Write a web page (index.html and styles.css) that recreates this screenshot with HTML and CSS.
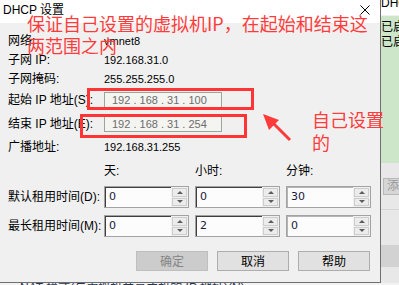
FILE: index.html
```html
<!DOCTYPE html>
<html lang="zh-CN">
<head>
    <meta charset="UTF-8">
    <title>DHCP 设置</title>
    <link rel="stylesheet" href="styles.css">
</head>
<body>
<div class="screen">
    <div class="top">
        <div class="dialog">
            <div class="titlebar">
                <span class="title">DHCP 设置</span>
                <svg class="close" width="10" height="10" viewBox="0 0 10 10">
                    <path d="M0.5 0.5 L9.5 9.5 M9.5 0.5 L0.5 9.5" stroke="#000" stroke-width="1" fill="none"/>
                </svg>
            </div>
            <div class="body">
                <div class="info">
                    <div class="row"><span>网络:</span><span class="value">vmnet8</span></div>
                    <div class="row"><span>子网 IP:</span><span class="value">192.168.31.0</span></div>
                    <div class="row"><span>子网掩码:</span><span class="value">255.255.255.0</span></div>
                    <div class="row tall"><span>起始 IP 地址(S):</span><div class="ip">192 . 168 . 31 . 100</div></div>
                    <div class="row taller"><span>结束 IP 地址(E):</span><div class="ip">192 . 168 . 31 . 254</div></div>
                    <div class="row last"><span>广播地址:</span><span class="value">192.168.31.255</span></div>
                </div>

                <!-- lease time grid -->
                <div class="lease">
                    <span></span>
                    <span class="head">天:</span>
                    <span class="head">小时:</span>
                    <span class="head">分钟:</span>

                    <span class="label">默认租用时间(D):</span>
                    <div class="spin"><div class="field">0</div><div class="arrows"><span class="up"></span><span class="down"></span></div></div>
                    <div class="spin"><div class="field">0</div><div class="arrows"><span class="up"></span><span class="down"></span></div></div>
                    <div class="spin dim"><div class="field">30</div><div class="arrows"><span class="up"></span><span class="down"></span></div></div>

                    <span class="label">最长租用时间(M):</span>
                    <div class="spin"><div class="field">0</div><div class="arrows"><span class="up"></span><span class="down"></span></div></div>
                    <div class="spin"><div class="field">2</div><div class="arrows"><span class="up"></span><span class="down"></span></div></div>
                    <div class="spin dim"><div class="field">0</div><div class="arrows"><span class="up"></span><span class="down"></span></div></div>
                </div>

                <div class="buttons">
                    <button type="button" class="btn disabled">确定</button>
                    <button type="button" class="btn">取消</button>
                    <button type="button" class="btn">帮助</button>
                </div>
            </div>
        </div>

        <div class="behind">
            <div class="bh-head"><span>DHCP</span></div>
            <div class="bh-list">
                <p>已启用</p>
                <p>已启用</p>
            </div>
            <div class="bh-btn">添加</div>
            <div class="bh-line"></div>
            <div class="bh-band"></div>
        </div>
    </div>
    <div class="under"><span>NAT 模式(与虚拟机共享主机的 IP 地址)(N)</span></div>

    <!-- red notes drawn over the screenshot -->
    <div class="note note-main">保证自己设置的虚拟机IP，在起始和结束这<br>两范围之内</div>
    <div class="note note-side">自己设置<br>的</div>
    <div class="mark m1"></div>
    <div class="mark m2"></div>
    <svg class="arrow" width="399" height="285" viewBox="0 0 399 285">
        <line x1="290" y1="140" x2="270" y2="120" stroke="#ff3a3a" stroke-width="3"/>
        <polygon points="263,114 279,120 269,130" fill="#ff3a3a"/>
    </svg>
</div>
</body>
</html>
```

FILE: styles.css
```css
* {
    margin: 0;
    padding: 0;
    box-sizing: border-box;
}

body {
    width: 399px;
    height: 285px;
    overflow: hidden;
    background-color: #f0f0f0;
    font-family: "Liberation Sans", "Noto Sans CJK SC", sans-serif;
    font-size: 12px;
    color: #000;
}

.screen {
    position: relative;
    height: 285px;
}

.top {
    display: flex;
    height: 283px;
}

.dialog {
    width: 381px;
    display: flex;
    flex-direction: column;
    background-color: #f0f0f0;
    border-right: 1px solid #6f6f6f;
    border-bottom: 1px solid #6f6f6f;
}

.titlebar {
    height: 23px;
    background-color: #fff;
    display: flex;
    align-items: center;
    padding-left: 3px;
    padding-bottom: 3px;
    line-height: 14px;
}

.close {
    margin-left: auto;
    margin-right: 10px;
}

.body {
    flex: 1;
    padding: 8px 0 0 8px;
}

.row {
    display: grid;
    grid-template-columns: 96px auto;
    align-items: center;
    height: 19px;
    line-height: 14px;
}

.row.tall {
    height: 23px;
}

.row.taller {
    height: 26px;
}

.row.last {
    height: 20px;
}

.value {
    font-size: 11px;
}

.ip {
    width: 118px;
    height: 16px;
    border: 1px solid #99a699;
    background-color: #f4f4f1;
    color: #6d6d6d;
    font-size: 11px;
    line-height: 14px;
    padding-left: 7px;
    white-space: pre;
}

.lease {
    display: grid;
    grid-template-columns: 90px 85px 85px 85px;
    grid-template-rows: 16px 22px 22px;
    column-gap: 6px;
    row-gap: 7px;
    margin-top: 6px;
    align-items: center;
    line-height: 14px;
}

.lease .label {
    white-space: nowrap;
}

.spin {
    display: flex;
    height: 22px;
    border: 1px solid #a3a3a3;
    background-color: #fcfcfc;
}

.spin .field {
    flex: 1;
    border-top: 1px solid #3f3f3f;
    border-left: 1px solid #3f3f3f;
    padding: 2px 0 0 3px;
    font-family: "DejaVu Sans", sans-serif;
    font-size: 11px;
    color: #1a1a3a;
}

.spin.dim .field {
    border-color: #b4b4b4;
}

.arrows {
    width: 17px;
    display: flex;
    flex-direction: column;
    gap: 1px;
    padding: 1px;
    background-color: #f0f0f0;
}

.arrows span {
    flex: 1;
    border: 1px solid #cdcdcd;
    background-color: #ececec;
    display: flex;
    align-items: center;
    justify-content: center;
}

.arrows .up::after {
    content: "";
    border-left: 3px solid transparent;
    border-right: 3px solid transparent;
    border-bottom: 3px solid #5c5c5c;
}

.arrows .down::after {
    content: "";
    border-left: 3px solid transparent;
    border-right: 3px solid transparent;
    border-top: 3px solid #5c5c5c;
}

.buttons {
    display: flex;
    justify-content: flex-end;
    gap: 9px;
    margin-top: 14px;
    padding-right: 10px;
}

.btn {
    width: 72px;
    height: 20px;
    border: 1px solid #adadad;
    background-color: #e1e1e1;
    font-family: "Noto Sans CJK SC", sans-serif;
    font-size: 12px;
    line-height: 16px;
    color: #000;
}

.btn.disabled {
    background-color: #cccccc;
    border-color: #bfbfbf;
    color: #858585;
}

.behind {
    flex: 1;
    display: flex;
    flex-direction: column;
    overflow: hidden;
    white-space: nowrap;
    background-color: #e8e8e8;
}

.bh-head {
    height: 15px;
    background-color: #fff;
    overflow: hidden;
}

.bh-head span {
    display: block;
    margin-top: -4px;
    line-height: 14px;
}

.bh-list {
    height: 148px;
    background-color: #cde6c9;
    padding-top: 5px;
    line-height: 15px;
    background-image: linear-gradient(#f0f0f0, #f0f0f0);
    background-size: 100% 1px;
    background-repeat: no-repeat;
}

.bh-btn {
    margin-top: 15px;
    margin-left: 2px;
    height: 17px;
    width: 30px;
    border: 1px solid #b8b8b8;
    background-color: #d6d6d6;
    color: #9a9a9a;
    padding-left: 3px;
    line-height: 15px;
}

.bh-line {
    margin-top: 14px;
    border-top: 1px solid #d6d6d6;
}

.bh-band {
    margin-top: 35px;
    height: 22px;
    background-color: #d2d2d2;
}

.under {
    height: 2px;
    overflow: hidden;
    background-color: #f3f3f3;
    color: #2a3550;
    padding-left: 20px;
}

.under span {
    display: block;
    margin-top: -1px;
    line-height: 12px;
}

.note {
    position: absolute;
    color: #ff3c3c;
    font-family: "Noto Sans CJK SC", sans-serif;
    font-size: 18px;
    white-space: nowrap;
}

.note-main {
    left: 27px;
    top: 12px;
    line-height: 22px;
}

.note-side {
    left: 312px;
    top: 108px;
    line-height: 23px;
}

.mark {
    position: absolute;
    border: 3px solid #ff3535;
}

.m1 {
    left: 87px;
    top: 88px;
    width: 167px;
    height: 22px;
}

.m2 {
    left: 80px;
    top: 114px;
    width: 167px;
    height: 24px;
}

.arrow {
    position: absolute;
    left: 0;
    top: 0;
    pointer-events: none;
}
```
